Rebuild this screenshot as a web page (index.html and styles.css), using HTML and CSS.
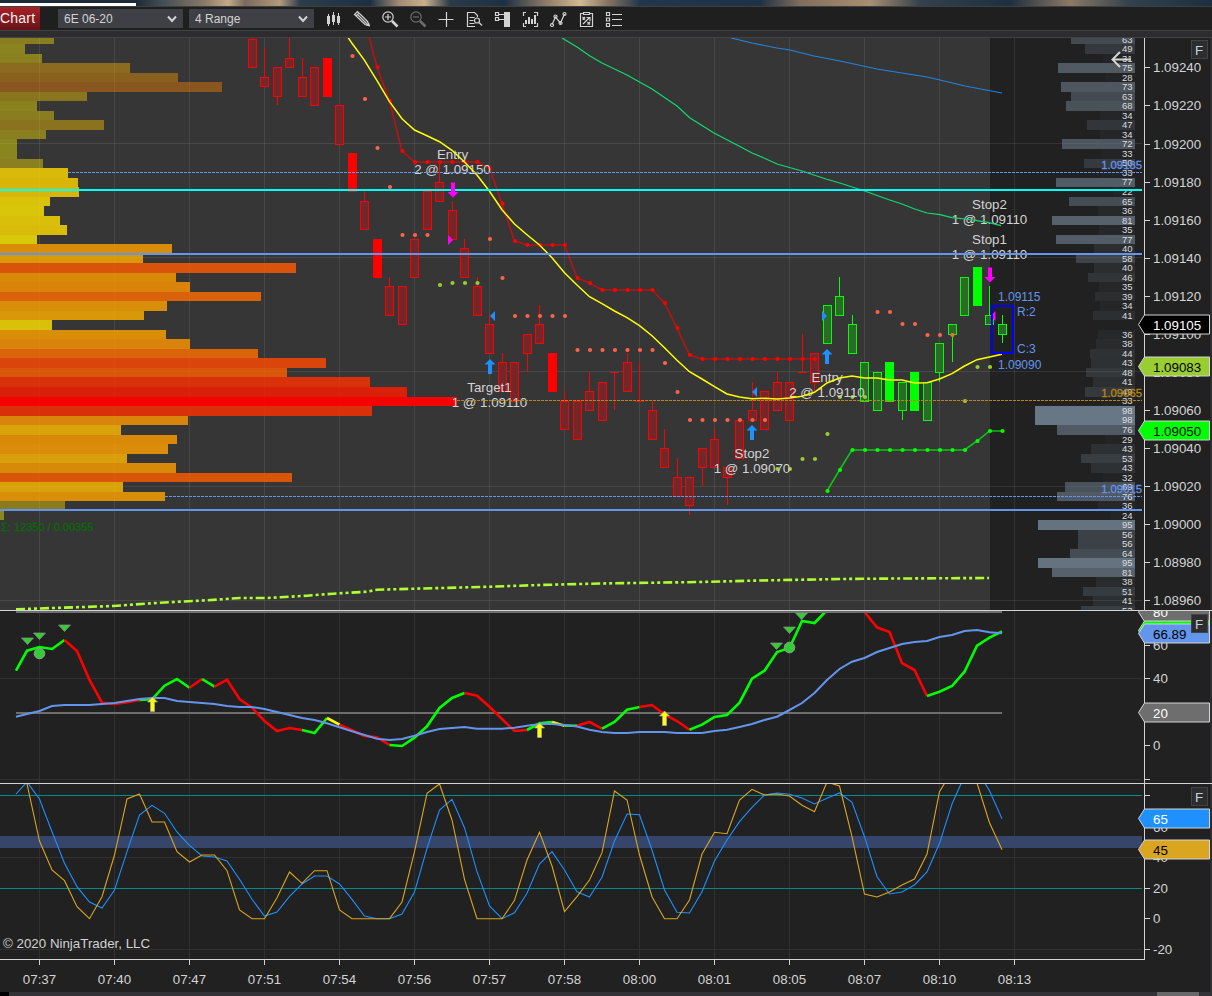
FILE: index.html
```html
<!DOCTYPE html>
<html lang="en">
<head>
    <meta charset="UTF-8">
    <meta name="viewport" content="width=device-width, initial-scale=1.0">
    <title>Chart - 6E 06-20</title>
    <link rel="stylesheet" href="styles.css">
</head>
<body>

    <div class="desktop-strip"><div class="strip-tab"></div></div>

    <header class="toolbar">
        <div class="tab">Chart</div>
        <div class="select instrument">6E 06-20
            <svg width="10" height="8" viewBox="0 0 10 8"><path d="M1 1.5l4 4.5 4-4.5"/></svg>
        </div>
        <div class="select">4 Range
            <svg width="10" height="8" viewBox="0 0 10 8"><path d="M1 1.5l4 4.5 4-4.5"/></svg>
        </div>
        <div class="icons">
            <svg viewBox="0 0 18 18"><path class="fill" d="M2 6h3v8H2zM7 5h3v7H7zM12 6h3v7h-3zM3 4h1v12H3zM8 2h1v13H8zM13 3h1v12h-1z"/></svg>
            <svg viewBox="0 0 18 18"><path d="M1.5 4.5l3-3 10 10 1.5 4-4-1zM3 6l3-3M5 5l9 9M7 4l8 8" /><path class="fill" d="M13 15.5l3-3 1 4z"/></svg>
            <svg viewBox="0 0 18 18"><circle cx="7" cy="7" r="5.2"/><path d="M4 7h6M7 4v6"/><path class="thick" d="M11 11l5.5 5.5"/></svg>
            <svg viewBox="0 0 18 18" class="disabled"><circle cx="7" cy="7" r="5.2"/><path d="M4 7h6"/><path class="thick" d="M11 11l5.5 5.5"/></svg>
            <svg viewBox="0 0 18 18"><path d="M1.500 9.500h15M9.500 2v15"/></svg>
            <svg viewBox="0 0 18 18"><path d="M10 16.500H2.500v-14h7l3 3V7M4.500 7.500h5M4.500 10.500h4M4.500 13.500h5"/><circle cx="12" cy="10.500" r="2.500"/><path d="M14 12.500l3 3"/></svg>
            <svg viewBox="0 0 18 18"><path class="fill" d="M11 2h6v15h-6z"/><path d="M2.500 2.500h3v3h-3zM2.500 7.500h3v3h-3zM6 4.500h5M6 9.500h5"/></svg>
            <svg viewBox="0 0 18 18"><path d="M5 2.500H2.500V6M13 2.500h3.500V6M2.500 13v3.500H5M16.500 13v3.500H13"/><path class="fill" d="M4 10h2v4H4zM7 7h2v7H7zM10 9h2v5h-2zM13 5h2v9h-2z"/></svg>
            <svg viewBox="0 0 18 18"><path d="M3 14.500L6.500 7l5 6 4-9"/><circle cx="3" cy="15" r="1.500"/><circle cx="6.500" cy="6.500" r="1.500"/><circle cx="11.500" cy="13" r="1.500"/><circle cx="15.500" cy="4" r="1.500"/></svg>
            <svg viewBox="0 0 18 18"><path d="M6 3.500H3.500v13h12v-13H13M6.500 2.500h6v2h-6zM5.500 7l2.500 2.500M8 7L5.500 9.500M10.500 12l2.500 2.500M13 12l-2.500 2.500M6 14l6-6M9.500 7.500H13V11"/></svg>
            <svg viewBox="0 0 18 18"><path d="M1.500 2.500h3v3h-3zM1.500 8h3v3h-3zM1.500 13.500h3v3h-3zM7 4.500h10M7 9.500h10M7 15.500h10"/></svg>
        </div>
    </header>

    <main class="chart">
        <svg id="price" class="panel" width="1212" height="572" viewBox="0 38 1212 572"></svg>
        <svg id="momentum" class="panel" width="1212" height="173" viewBox="0 610 1212 173"></svg>
        <svg id="stochastic" class="panel" width="1212" height="176" viewBox="0 783 1212 176"></svg>
        <svg id="times" class="panel" width="1212" height="33" viewBox="0 959 1212 33"></svg>
    </main>

    <footer class="scrollbar"><div class="thumb"></div></footer>

    <script src="chart.js"></script>
</body>
</html>
```
FILE: styles.css
```css
body {
    margin: 0;
    width: 1212px;
    height: 996px;
    overflow: hidden;
    background-color: #212121;
    font-family: "Liberation Sans", Arial, sans-serif;
}
.desktop-strip {
    height: 6px;
    padding-top: 3px;
    box-sizing: border-box;
    background: linear-gradient(90deg, #1d2b38 0, #1d2b38 136px, #3f4b55 160px, #8b7a68 205px, #c4ab86 228px, #7b6a5c 245px, #b29a7c 280px, #2c3d4c 300px, #1c3043 370px, #a58e74 400px, #c9b08b 425px, #2a3b49 450px, #1d3144 505px, #8c7a67 545px, #d1b992 580px, #826f60 610px, #22384a 640px, #1d3245 760px, #806d5c 800px, #a88f72 870px, #33414c 920px, #1d2f40 1010px, #8d7965 1070px, #31414d 1130px, #1d2f40 1212px);
}
.strip-tab {
    width: 136px;
    height: 3px;
    background-color: #fff;
}
.toolbar {
    height: 32px;
    box-sizing: border-box;
    display: flex;
    align-items: flex-start;
    background-color: #2d2d30;
    border-top: 1px solid #3f3f42;
    border-bottom: 1px solid #424245;
    background-image: linear-gradient(#1f1f1f 23px, #424245 23px, #424245 24px, transparent 24px);
}
.tab {
    width: 40px;
    height: 23px;
    line-height: 23px;
    box-sizing: border-box;
    margin-right: 18px;
    color: #f1f1f1;
    font-size: 14px;
    letter-spacing: 0.2px;
    background: linear-gradient(#a82127, #671417);
}
.select {
    display: flex;
    align-items: center;
    justify-content: space-between;
    width: 125px;
    height: 19px;
    margin-top: 2px;
    padding: 0 6px;
    box-sizing: border-box;
    background-color: #3f3f46;
    color: #d3d3d3;
    font-size: 12px;
}
.instrument {
    margin-right: 6px;
}
.select svg path {
    fill: none;
    stroke: #d3d3d3;
    stroke-width: 2;
}
.icons {
    display: flex;
    gap: 10px;
    margin: 3px 0 0 11px;
}
.icons svg {
    width: 18px;
    height: 18px;
    fill: none;
    stroke: #d3d3d3;
    stroke-width: 1.2;
}
.icons .fill {
    fill: #d3d3d3;
    stroke: none;
}
.icons .thick {
    stroke-width: 2.6;
}
.icons .disabled {
    stroke: #6c6c6c;
}
.panel {
    display: block;
    font-size: 13.33px;
    fill: #d3d3d3;
}
.crisp {
    shape-rendering: crispEdges;
}
.depth-text {
    font-size: 9.5px;
    text-anchor: end;
    fill: #dcdcdc;
}
.level-text {
    font-size: 11.3px;
    text-anchor: end;
    stroke-width: 0.3;
}
.middle {
    text-anchor: middle;
}
.range-text {
    font-size: 12px;
    fill: #6495ed;
}
.sum-text {
    font-size: 11px;
    fill: #0b6a0b;
    stroke: #0b6a0b;
    stroke-width: 0.3;
}
.scrollbar {
    height: 4px;
    display: flex;
    justify-content: flex-end;
    box-sizing: border-box;
    padding-right: 13px;
    border-left: 9px solid #000;
    background-color: #333337;
}
.thumb {
    width: 42px;
    background-color: #68686b;
}
```
FILE: chart.js
```js
const X0 = 39.5;
const STEP = 12.5;
const TICK = 9.52;

const barX = k => X0 + k * STEP;
// prices are stored without the 1.09 prefix, in 0.00001 units
const priceY = p => 143.5 + (200 - p) * 1.904;

// index, top, bottom, high, low, solid
const candles = [
    [17, 255, 240, 257, 240], [18, 235, 230, 250, 230], [19, 240, 225, 240, 220], [20, 245, 240, 258, 240],
    [21, 235, 225, 245, 225], [22, 240, 220, 240, 220], [23, 245, 225, 245, 225, 1], [24, 220, 200, 220, 200],
    [25, 195, 175, 195, 175, 1], [26, 170, 155, 175, 155], [27, 150, 130, 150, 130, 1], [28, 125, 110, 130, 110],
    [29, 125, 105, 125, 105], [30, 150, 130, 150, 130], [31, 175, 155, 175, 155], [32, 180, 170, 190, 170],
    [33, 165, 150, 170, 150], [34, 145, 130, 150, 130], [35, 125, 110, 130, 110], [36, 105, 90, 110, 90],
    [37, 85, 70, 90, 70], [38, 85, 65, 85, 65], [39, 100, 90, 100, 80], [40, 105, 95, 115, 95],
    [41, 90, 70, 90, 70, 1], [42, 65, 50, 70, 50], [43, 65, 45, 65, 45], [44, 70, 60, 80, 60],
    [45, 75, 55, 75, 55], [46, 80, 80, 80, 60], [47, 85, 70, 90, 70], [48, 65, 65, 85, 65],
    [49, 60, 45, 65, 45], [50, 40, 30, 50, 30], [51, 25, 15, 35, 15], [52, 25, 10, 25, 5],
    [53, 40, 30, 40, 20], [54, 45, 30, 50, 30], [55, 30, 25, 30, 10], [56, 55, 35, 55, 35],
    [57, 60, 55, 75, 55], [58, 70, 50, 70, 50], [59, 75, 60, 80, 60], [60, 75, 55, 75, 55],
    [61, 80, 80, 100, 80], [62, 90, 75, 90, 70], [63, 115, 95, 115, 95], [64, 120, 110, 130, 110],
    [65, 105, 90, 110, 90], [66, 85, 65, 85, 65], [67, 80, 60, 80, 60], [68, 85, 65, 85, 65, 1],
    [69, 75, 60, 75, 55], [70, 80, 60, 80, 60, 1], [71, 75, 55, 75, 55], [72, 95, 80, 95, 75],
    [73, 105, 100, 105, 85], [74, 130, 110, 130, 110], [75, 135, 115, 135, 115, 1], [76, 110, 105, 125, 105],
    [77, 105, 100, 110, 95]
];
const FIRST_UP = 63;

// volume profile, one row per 0.00005 starting at 1.09255
const profile = [54, 25, 42, 130, 178, 222, 87, 37, 54, 104, 46, 17, 17, 43, 68, 78, 79, 50, 44, 60, 67, 37, 172, 143,
    296, 176, 190, 261, 167, 144, 52, 166, 190, 258, 326, 287, 370, 407, 457, 372, 188, 121, 177, 168, 127, 176, 292,
    123, 165, 65, 4];

// market depth, same rows
const depth = [63, 49, 31, 75, 28, 73, 63, 68, 34, 47, 34, 72, 33, 50, 33, 77, 22, 65, 36, 81, 35, 77, 40, 58, 40, 46,
    35, 39, 34, 41, 0, 36, 38, 44, 43, 48, 41, 49, 33, 98, 98, 76, 29, 43, 53, 43, 32, 69, 76, 36, 24, 95, 56, 56, 64,
    95, 81, 38, 51, 41, 53];

const average = [25, 43.3, 60.3, 80.7, 101.7, 118.7, 130, 135.7, 141.7, 150.3, 162, 175, 191.3, 209.7, 224, 234.7, 245,
    257.7, 272.7, 285, 296.7, 303.7, 311, 317.7, 325.7, 335.7, 347.7, 360.3, 371.7, 379, 386.7, 394, 397, 398.7, 398.3,
    399, 398, 396.3, 392.3, 383, 378, 376, 378, 378, 380, 380, 383, 382.7, 379, 373.7, 366, 359.7, 357, 354.3];
const upperStop = [20, 67, 101, 151, 162, 162, 162, 162, 162, 162, 168, 203.7, 241, 245, 245, 245, 245, 278, 283, 290,
    290, 290, 290, 290, 303, 328, 355, 359, 359, 359, 359, 359, 359, 359, 359, 359, 359];
const lowerStop = [491, 470, 450, 450, 450, 450, 450, 450, 450, 450, 450, 450, 441, 431, 431];

// y, then the bar indexes that carry a dot at that height
const redDots = [[56, 25], [99, 26], [148, 27], [187, 28], [235, 29, 30, 31], [239, 36], [278, 37],
    [316, 38, 39, 40, 41, 42], [350, 43, 44, 45, 46, 47, 48, 49], [363, 50], [392, 51],
    [420, 52, 53, 54, 55, 56, 57, 58], [312, 67, 68], [324, 69, 70], [335, 71, 72, 73]];
const greenDots = [[285, 32], [283, 33, 34, 35], [469, 59, 60], [459, 61, 62], [434, 63], [397, 64, 65, 66],
    [401, 74], [367, 75, 76]];

const momentum = [670.7, 650.7, 647, 649, 640, 651, 680, 702.7, 704, 702.3, 700, 699.3, 685.7, 679, 687.7, 679, 686.7,
    679.7, 699, 707.7, 721, 731, 728, 730, 733, 718, 724.7, 730.3, 736, 737.3, 745, 746, 737.7, 726.3, 708, 698, 693,
    695.7, 706.7, 719, 731, 730, 723.3, 722, 725.7, 725.7, 722, 728.7, 722, 709.7, 707, 705, 714.3, 721, 729.7, 724.7,
    717, 715, 702.7, 678.7, 670.7, 652, 648, 621, 623, 610, 598, 598, 612, 627.3, 632, 663, 670, 696, 691.7, 686,
    671.7, 645.7, 637.7, 631.3];
const momentumColors = [[-2, 2, 'lime'], [2, 8, 'red'], [8, 12, 'lime'], [12, 13, 'red'], [13, 14, 'lime'],
    [14, 21, 'red'], [21, 23, 'lime'], [23, 24, 'yellow'], [24, 28, 'red'], [28, 34, 'lime'], [34, 39, 'red'],
    [39, 41, 'lime'], [41, 42, 'yellow'], [42, 43, 'lime'], [43, 45, 'red'], [45, 48, 'lime'], [48, 52, 'red'],
    [52, 64, 'lime'], [65, 71, 'red'], [71, 77, 'lime']];
const signal = [716.7, 714, 711, 706, 705, 705, 705, 704, 703, 701, 699, 698, 698, 701, 702, 703, 704, 706, 707, 707,
    709, 712, 715, 718, 720, 723.3, 727.3, 731.3, 735, 738.7, 740, 739, 735.7, 732, 729, 728, 727, 728.7, 728.7, 728.7,
    727.7, 725.7, 724, 724, 725, 726.5, 729.7, 732, 733, 733, 732, 732, 732, 733, 733, 733, 731, 729.7, 727, 724, 720,
    716.7, 710, 703, 693, 680, 669, 661.7, 658, 652, 648, 644, 642, 641, 637, 635, 631, 630, 632.3, 633.3];

const stochD = [794, 782, 799, 831.7, 863.3, 886.7, 902, 908, 890, 851.7, 815, 805.3, 813.3, 832, 845.3, 856, 857, 861,
    879.3, 899.3, 916, 912, 896.3, 884, 876, 876, 884, 899.3, 916, 918.7, 918.7, 914, 892, 848.3, 810, 799.3, 827.7,
    871.7, 906, 918.7, 912.7, 893.3, 864, 851.7, 870, 891.7, 897, 877.3, 841, 814, 814.7, 850, 890, 912.3, 913, 891.7,
    861, 840, 821.7, 807.3, 795, 793, 794.3, 798, 804, 798.3, 793, 802.3, 836.7, 876.7, 894, 892, 885, 872, 843.3, 804,
    776, 770, 790.7, 818.7];
const stochK = [770, 784, 841, 870, 880.7, 906.7, 918.7, 896.7, 855, 799, 794, 822, 822, 851.7, 862, 855, 855, 870.7,
    910, 918.7, 918.7, 897.7, 872, 883.3, 870.7, 870.7, 910, 918.7, 918.7, 918.7, 918.7, 902, 851.7, 793.3, 784, 820,
    879.3, 918.7, 918.7, 918.7, 900.3, 860, 832.3, 866, 911.7, 896.7, 880, 852.7, 791, 800, 855, 896.7, 918.7, 918.7,
    900, 854, 832.3, 833.7, 800, 789.3, 795, 794, 796, 805.3, 811.7, 782, 786, 836.7, 894, 897, 892, 885, 879, 854,
    791.7, 771, 760, 783, 822.7, 849.7];

const times = ['07:37', '07:40', '07:47', '07:51', '07:54', '07:56', '07:57', '07:58', '08:00', '08:01', '08:05',
    '08:07', '08:10', '08:13'];

function rect(x, y, w, h, fill, extra = '') {
    return `<rect class="crisp" x="${x}" y="${y}" width="${w}" height="${h}" fill="${fill}" ${extra}/>`;
}

function text(x, y, str, cls = '', fill = '') {
    return `<text x="${x}" y="${y}" class="${cls}" ${fill ? `fill="${fill}"` : ''}>${str}</text>`;
}

function polyline(points, color, width, extra = '') {
    return `<polyline points="${points.join(' ')}" fill="none" stroke="${color}" stroke-width="${width}" ${extra}/>`;
}

// y values of consecutive bars, starting at bar k0
function series(k0, ys, color, width, extra) {
    const points = ys.map((y, i) => `${Math.max(16, barX(k0 + i))},${y}`);
    return polyline(points, color, width, extra);
}

function dots(groups, color) {
    return groups.map(([y, ...ks]) => ks.map(k => `<circle cx="${barX(k) + 0.5}" cy="${y}" r="2.1" fill="${color}"/>`).join('')).join('');
}

function grid(top, height, rows, color) {
    let out = '';
    for (let i = 0; i < times.length; i++) out += rect(39 + i * 75, top, 1, height, color);
    rows.forEach(y => out += rect(0, y, 1142, 1, color));
    return out;
}

function axis(top, height, labels) {
    let out = rect(1144, top, 1, height, '#d3d3d3');
    labels.forEach(([y, label]) => {
        out += rect(1145, y, 5, 1, '#d3d3d3');
        out += text(1153, y + 5.3, label);
    });
    return out;
}

function tag(y, label, fill, color) {
    return `<path d="M1138.5 ${y}L1144.500 ${y - 9.5}H1209.500V${y + 9.5}H1144.500Z" fill="${fill}" stroke="#d3d3d3"/>`
        + text(1153, y + 5, label, '', color);
}

function fixedBox(y) {
    return `<rect x="1191.500" y="${y}" width="16" height="18" fill="#2d2d30" stroke="#434346"/>` + text(1195, y + 14, 'F', '', '#c5d3de');
}

function arrow(x, y, dir, color) {
    // dir 1 points up, -1 points down; y is the tip
    return `<path d="M${x} ${y}l5.500 ${5.500 * dir}h-3.500v${9.500 * dir}h-4v${-9.500 * dir}h-3.500z" fill="${color}"/>`;
}

function side(x, y, dir, color) {
    return `<path d="M${x} ${y}l${-5 * dir} -5v10z" fill="${color}"/>`;
}

function trade(x, y, name, detail) {
    return text(x, y, name, 'middle') + text(x, y + 15, detail, 'middle');
}

function drawPrice() {
    let out = rect(0, 38, 990, 572, '#363636') + rect(990, 38, 154, 572, '#212121');
    const rows = [200, 140, 80, 20, -40].map(p => Math.floor(priceY(p)));
    out += grid(38, 572, rows, 'rgba(255,255,255,0.085)');

    // volume profile
    profile.forEach((w, i) => {
        const p = 255 - i * 5;
        const top = Math.round(priceY(p) - TICK / 2 + 0.75);
        const bottom = Math.round(priceY(p - 5) - TICK / 2 + 0.75);
        const opacity = w === 457 ? 0.96 : (p > 185 || p < 15) ? 0.42 : 0.81;
        const green = Math.round(255 * (1 - w / 457));
        out += rect(0, top, w, bottom - top, `rgb(255,${green},0)`, `opacity="${opacity}"`);
    });

    // market depth
    depth.forEach((v, i) => {
        if (!v) return;
        const y = priceY(255 - i * 5);
        const top = Math.round(y - TICK / 2 + 0.75);
        const bottom = Math.round(y + TICK / 2 + 0.75);
        const w = Math.round(v * 1.02);
        out += rect(1135 - w, top, w, bottom - top, 'slategray', `opacity="${Math.max(0.04, (v - 30) / 75)}"`);
        out += text(1132.5, y + 3.900, v, 'depth-text');
    });

    // candles
    candles.forEach(([k, top, bottom, high, low, solid]) => {
        const x = Math.floor(barX(k));
        const up = k >= FIRST_UP;
        const color = up ? 'lime' : 'red';
        const body = solid ? color : up ? 'rgb(42,108,38)' : 'rgb(116,38,40)';
        const yt = Math.round(priceY(top));
        const yb = Math.round(priceY(bottom));
        const yh = Math.round(priceY(high));
        const yl = Math.round(priceY(low));
        if (yh < yt) out += rect(x, yh, 1, yt - yh, color);
        if (yl > yb) out += rect(x, yb, 1, yl - yb, color);
        out += rect(x - 4, yt, 9, yb - yt + 1, color);
        if (!solid && yb > yt) out += rect(x - 3, yt + 1, 7, yb - yt - 1, body);
    });

    out += text(1, 531, 'Σ: 12350 / 0.00355', 'sum-text');

    out += dots(redDots, 'tomato') + dots(greenDots, 'yellowgreen');
    out += series(26, upperStop, 'rgba(255,0,0,0.65)', 1.6);
    out += dots(upperStop.slice(1).map((y, i) => [y, 27 + i]), 'red');
    out += series(63, lowerStop, 'rgba(0,255,0,0.7)', 1.6);
    out += dots(lowerStop.map((y, i) => [y, 63 + i]), 'lime');

    out += trade(452.5, 159, 'Entry', '2 @ 1.09150');
    out += trade(489.5, 392, 'Target1', '1 @ 1.09110');
    out += trade(752, 458, 'Stop2', '1 @ 1.09070');
    out += trade(827, 382, 'Entry', '2 @ 1.09110');
    out += trade(989.5, 209, 'Stop2', '1 @ 1.09110');
    out += trade(989.5, 244, 'Stop1', '1 @ 1.09110');

    // moving averages
    out += polyline(['562,38', '577,47', '590,56', '602,63', '627,75', '652,89', '677,106', '690,118', '714,133', '739,146',
        '752,153', '764,158', '777,164', '802,171', '826,179', '839,182.7', '864,190.7', '889,199.7', '902,204',
        '914,208.7', '927,213', '940,214.7', '952,217.7', '965,219', '977,220.7', '989,222.7', '1001,225.7'], '#12d96f', 1.2);
    out += polyline(['731,38', '752,43', '777,48', '790,50', '814,56', '840,61', '877,69', '902,73', '927,77', '940,80', '965,86', '1002,93'], '#2583dc', 1.2);
    out += series(24, average, 'yellow', 1.5);
    out += polyline(['16,609.300', '53,608', '113,606', '160,602.700', '207,600.300', '240,598', '267,598', '307,595.700',
        '333,593.700', '367,591.700', '377,589.700', '480,587', '540,585', '600,583.500', '700,582', '760,580.500',
        '840,579', '900,578.500', '989,578'], 'greenyellow', 2.6, 'stroke-dasharray="9 3 3 3 3 3"');

    // levels
    out += rect(0, 189, 1142, 2, 'cyan');
    out += rect(0, 253, 1142, 2, '#6495ed');
    out += rect(0, 509, 1142, 2, '#6495ed');
    [[68, 172, '#6495ed', '1.09185'], [457, 400, '#b8860b', '1.09065'], [165, 496, '#6495ed', '1.09015']].forEach(([x, y, color, label]) => {
        out += `<path class="crisp" d="M${x} ${y + 0.5}H1142" stroke="${color}" stroke-dasharray="3 1"/>`;
        out += `<text x="1142" y="${y - 3}" class="level-text" fill="${color}" stroke="${color}">${label}</text>`;
    });

    // executions
    out += arrow(453, 197.5, -1, 'magenta') + arrow(990, 282.5, -1, 'magenta');
    out += arrow(490, 359, 1, 'dodgerblue') + arrow(752, 425, 1, 'dodgerblue') + arrow(827, 349, 1, 'dodgerblue');
    out += side(453, 240, 1, 'magenta') + side(827, 316, 1, 'dodgerblue');
    out += side(490, 316, -1, 'dodgerblue') + side(752, 392, -1, 'dodgerblue') + side(990.5, 316, -1, 'magenta');

    out += '<rect class="crisp" x="992" y="306" width="21" height="47" fill="none" stroke="blue" stroke-width="2"/>';
    out += text(998, 301, '1.09115', 'range-text') + text(1017, 316, 'R:2', 'range-text');
    out += text(1017, 353, 'C:3', 'range-text') + text(998, 369, '1.09090', 'range-text');

    const labels = [];
    for (let p = 240; p >= -40; p -= 20) {
        labels.push([Math.round(priceY(p)), (1.09 + p / 100000).toFixed(5)]);
    }
    out += axis(38, 572, labels);
    out += tag(324.5, '1.09105', '#000', '#fff') + tag(366.5, '1.09083', 'yellowgreen', '#000') + tag(430.5, '1.09050', 'lime', '#000');
    out += fixedBox(40.5);
    out += '<path d="M1131 59.500H1113M1120 52l-7.500 7.500 7.500 7.500" fill="none" stroke="#d3d3d3" stroke-width="2"/>';
    out += rect(1210, 38, 2, 572, '#2d2d30');
    document.getElementById('price').innerHTML = out;
}

function drawMomentum() {
    let out = grid(610, 173, [678, 779], '#313131');
    out += rect(16, 712, 986, 2, '#6e6e6e');
    momentumColors.forEach(([from, to, color]) => {
        out += series(from, momentum.slice(from + 2, to + 3), color, 2.6);
    });
    out += series(-2, signal, '#6495ed', 2);
    out += rect(16, 611, 986, 2, '#6e6e6e');

    [[27.5, 638], [39.5, 633], [64.5, 625], [776.5, 643], [789.5, 627], [801.5, 613]].forEach(([x, y]) => {
        out += `<path d="M${x - 6} ${y}h12l-6 6.500z" fill="limegreen" stroke="#8f8f8f" stroke-width="0.7"/>`;
    });
    [[39.5, 653.5], [789.5, 647.5]].forEach(([x, y]) => {
        out += `<circle cx="${x}" cy="${y}" r="5.3" fill="limegreen" stroke="#9a9a9a"/>`;
    });
    [[152.5, 697], [539.5, 723], [664.5, 711]].forEach(([x, y]) => {
        out += `<path d="M${x} ${y}l5 5h-3v9.500h-4v-9.500h-3z" fill="yellow" stroke="#a8a8a8" stroke-width="0.7"/>`;
    });

    out += axis(610, 173, [[645, '60'], [678, '40'], [745, '0'], [779, '']]);
    out += tag(612, '80', '#6e6e6e', '#fff') + tag(630.5, '', 'lime') + tag(633.5, '66.89', '#6495ed', '#000') + tag(712.5, '20', '#6e6e6e', '#fff');
    out += fixedBox(614.5);
    out += rect(0, 610, 1212, 1, '#d3d3d3') + rect(1210, 611, 2, 172, '#2d2d30');
    document.getElementById('momentum').innerHTML = out;
}

function drawStochastic() {
    let out = grid(783, 176, [857, 949], '#313131');
    out += rect(0, 836, 1142, 12, '#36466a');
    out += rect(0, 795, 1142, 1, '#008b8b') + rect(0, 888, 1142, 1, '#008b8b');
    out += series(-2, stochD, 'dodgerblue', 1.1);
    out += series(-2, stochK, 'goldenrod', 1.1);
    out += text(3, 948, '© 2020 NinjaTrader, LLC');
    out += axis(783, 176, [[795, ''], [827, '60'], [857, '40'], [888, '20'], [918, '0'], [949, '-20']]);
    out += tag(818.5, '65', 'dodgerblue', '#fff') + tag(849.5, '45', 'goldenrod', '#000');
    out += fixedBox(787.5);
    out += rect(0, 783, 1212, 1, '#d3d3d3') + rect(1210, 784, 2, 175, '#2d2d30');
    document.getElementById('stochastic').innerHTML = out;
}

function drawTimes() {
    let out = rect(0, 959, 1145, 1, '#d3d3d3');
    times.forEach((t, i) => {
        out += rect(39 + i * 75, 960, 1, 5, '#d3d3d3') + text(39.5 + i * 75, 984, t, 'middle');
    });
    out += rect(1210, 959, 2, 33, '#2d2d30');
    document.getElementById('times').innerHTML = out;
}

drawPrice();
drawMomentum();
drawStochastic();
drawTimes();
```
